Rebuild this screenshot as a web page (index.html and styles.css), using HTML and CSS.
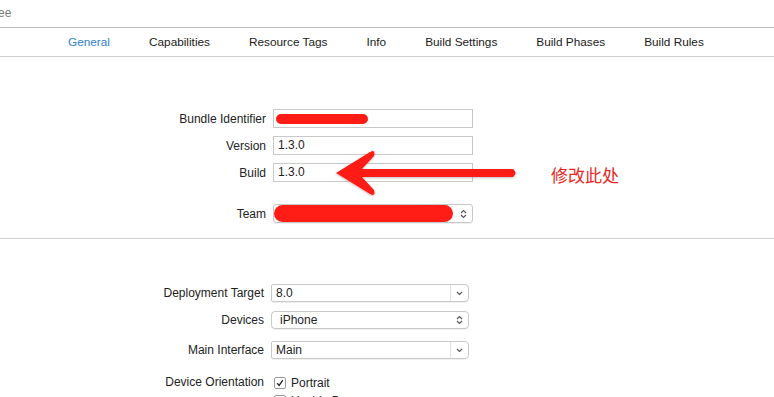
FILE: index.html
```html
<!DOCTYPE html>
<html lang="en">
<head>
  <meta charset="UTF-8">
  <title>General</title>
  <link rel="stylesheet" href="styles.css">
</head>
<body>
  <div class="titlebar">ee</div>

  <nav class="tabs">
    <span class="tab active">General</span>
    <span class="tab">Capabilities</span>
    <span class="tab">Resource Tags</span>
    <span class="tab">Info</span>
    <span class="tab">Build Settings</span>
    <span class="tab">Build Phases</span>
    <span class="tab">Build Rules</span>
  </nav>

  <section class="panel identity">
    <div class="form">
      <label>Bundle Identifier</label>
      <div class="field"><span class="scribble short"></span></div>

      <label>Version</label>
      <div class="field">1.3.0</div>

      <label>Build</label>
      <div class="field">1.3.0</div>

      <label class="team-label">Team</label>
      <div class="popup team">
        <span class="scribble wide"></span>
        <svg class="updown" width="7" height="10" viewBox="0 0 7 10"><path d="M1 4 L3.5 1.5 L6 4 M1 6 L3.5 8.5 L6 6" fill="none" stroke="#555" stroke-width="1.1"/></svg>
      </div>
    </div>

    <svg class="arrow" width="200" height="56" viewBox="330 145 200 56">
      <defs>
        <filter id="sh" x="-10%" y="-20%" width="120%" height="140%">
          <feDropShadow dx="0" dy="1" stdDeviation="1" flood-color="#000" flood-opacity="0.25"/>
        </filter>
      </defs>
      <path filter="url(#sh)" fill="#ff1d15" d="M336 173 L370 152 Q376 149 374 156 L362 169 L513 169 Q518 173 513 177 L362 177 L374 190 Q376 197 370 194 Z"/>
    </svg>
    <span class="note">修改此处</span>
  </section>

  <section class="panel deploy">
    <div class="form">
      <label>Deployment Target</label>
      <div class="popup combo">
        <span>8.0</span>
        <span class="combo-btn"><svg width="7" height="5" viewBox="0 0 7 5"><path d="M1 1 L3.5 3.5 L6 1" fill="none" stroke="#555" stroke-width="1.1"/></svg></span>
      </div>

      <label class="gap-lg">Devices</label>
      <div class="popup button gap-lg">
        <span>iPhone</span>
        <svg class="updown" width="7" height="10" viewBox="0 0 7 10"><path d="M1 4 L3.5 1.5 L6 4 M1 6 L3.5 8.5 L6 6" fill="none" stroke="#555" stroke-width="1.1"/></svg>
      </div>

      <label class="gap-xl">Main Interface</label>
      <div class="popup combo gap-xl">
        <span>Main</span>
        <span class="combo-btn"><svg width="7" height="5" viewBox="0 0 7 5"><path d="M1 1 L3.5 3.5 L6 1" fill="none" stroke="#555" stroke-width="1.1"/></svg></span>
      </div>

      <label class="gap-xxl top">Device Orientation</label>
      <div class="checks gap-xxl">
        <div class="check"><span class="box checked">
          <svg width="10" height="10" viewBox="0 0 10 10"><path d="M2.2 5.2 L4.2 7.4 L7.8 2.2" fill="none" stroke="#222" stroke-width="1.3"/></svg>
        </span>Portrait</div>
        <div class="check"><span class="box"></span>Upside Down</div>
      </div>
    </div>
  </section>
</body>
</html>
```

FILE: styles.css
```css
body {
  margin: 0;
  background: #fff;
  font-family: "Liberation Sans", Arial, sans-serif;
  font-size: 12px;
  color: #222;
  overflow: hidden;
}
.titlebar {
  height: 27px;
  line-height: 26px;
  color: #7a7a7a;
  font-size: 12px;
  margin-left: -2px;
  border-bottom: 1px solid #b8b8b8;
}
.tabs {
  display: flex;
  gap: 39px;
  height: 28px;
  align-items: center;
  padding-left: 68px;
  font-size: 11.8px;
  border-bottom: 1px solid #cfcfcf;
}
.tab { color: #1a1a1a; margin-top: -1px; }
.tab.active { color: #2d7fd0; }

.panel { position: relative; }
.identity {
  padding: 52px 0 15px;
  border-bottom: 1px solid #d0d0d0;
}
.deploy { padding-top: 45px; }

.form {
  display: grid;
  grid-template-columns: 266px 200px;
  column-gap: 7px;
  row-gap: 8px;
  align-items: center;
}
.deploy .form { grid-template-columns: 264px 198px; }
.form label { text-align: right; }
.form label.top { align-self: start; line-height: 13px; }

.field {
  height: 17px;
  border: 1px solid #c9c9c9;
  line-height: 17px;
  padding-left: 4px;
  display: flex;
  align-items: center;
}
.team-label, .team { margin-top: 14px; }

.popup {
  height: 16px;
  border: 1px solid #c8c8c8;
  border-radius: 3px;
  display: flex;
  align-items: center;
  justify-content: space-between;
  padding-left: 6px;
  box-shadow: 0 1px 0 rgba(0,0,0,0.06);
}
.popup .updown { margin-right: 5px; }
.team { padding-left: 0; height: 17px; }
.combo { padding-left: 4px; border-radius: 2px 4px 4px 2px; }
.button { padding-left: 8px; border-radius: 4px; }
.combo-btn {
  width: 17px;
  height: 100%;
  display: flex;
  align-items: center;
  justify-content: center;
  border-left: 1px solid #e2e2e2;
}
.gap-lg { margin-top: 1px; }
.gap-xl { margin-top: 4px; }
.gap-xxl { margin-top: 9px; }

.scribble {
  display: block;
  background: #ff1d15;
  border-radius: 6px;
}
.short { width: 92px; height: 10px; margin-left: -2px; }
.wide { width: 179px; height: 17px; border-radius: 9px; }

.checks { display: flex; flex-direction: column; gap: 5px; }
.check { display: flex; align-items: center; gap: 5px; height: 13px; }
.box {
  width: 10px;
  height: 10px;
  border: 1px solid #9a9a9a;
  border-radius: 2px;
  margin-left: 3px;
  display: flex;
  align-items: center;
  justify-content: center;
}

.arrow {
  position: absolute;
  left: 330px;
  top: 88px;
}
.note {
  position: absolute;
  left: 551px;
  top: 105px;
  font-family: "Noto Sans CJK SC", sans-serif;
  font-size: 17px;
  color: #e8261f;
}
```
